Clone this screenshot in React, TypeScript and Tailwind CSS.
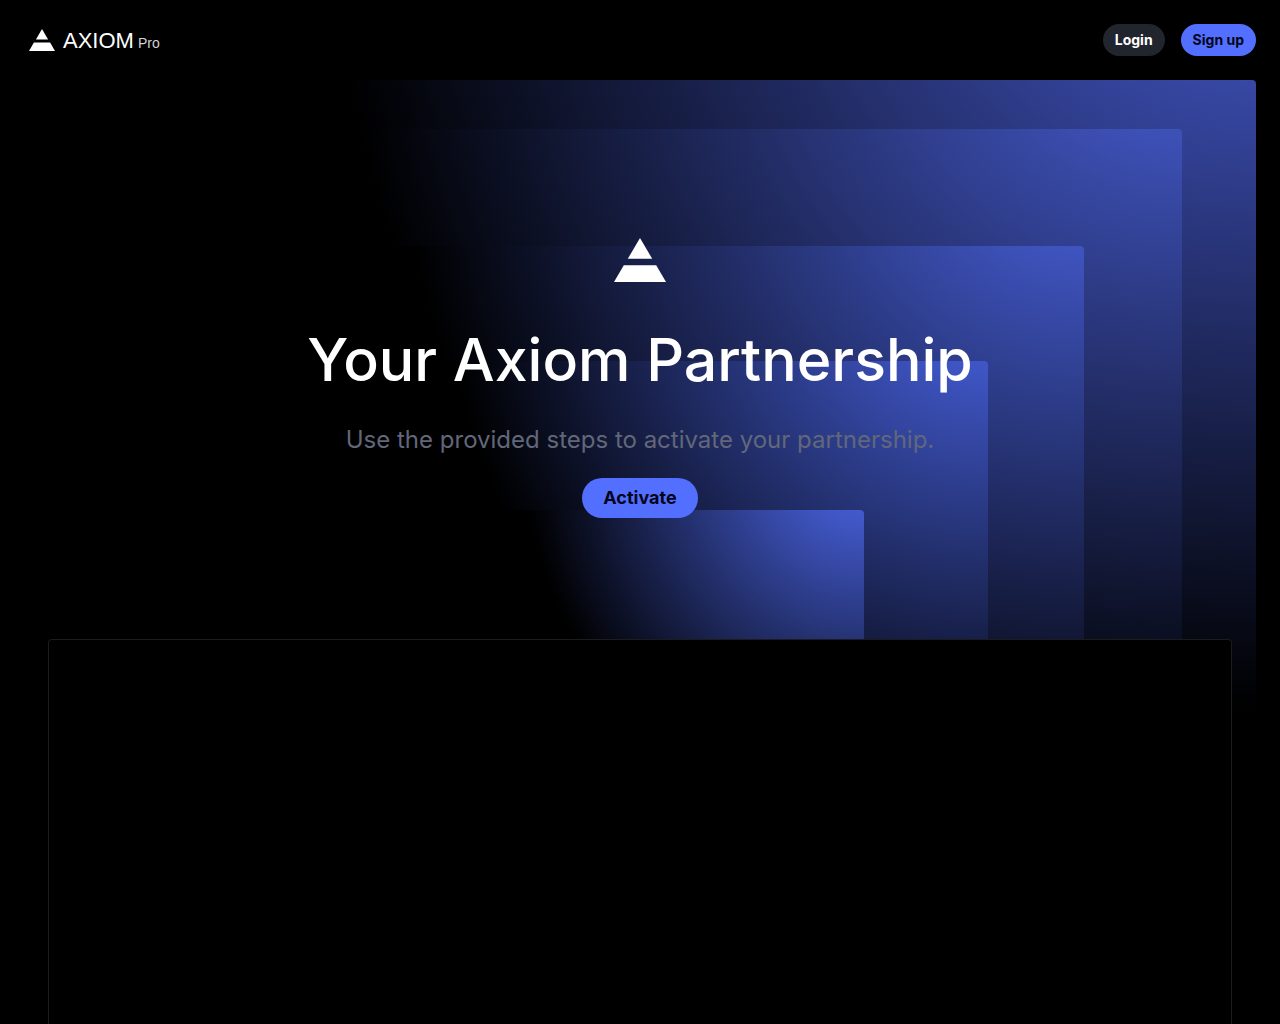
type LogoProps = {
  className?: string
}

function LogoMark({ className }: LogoProps) {
  return (
    <svg viewBox="0 0 52 44" className={className} fill="currentColor" aria-hidden="true">
      <path d="M26 0 38.2 20.8H13.8Z" />
      <path d="M9.8 27.2H42.2L52 44H0Z" />
    </svg>
  )
}

function Header() {
  return (
    <header className="flex h-20 items-center justify-between pl-7 pr-6">
      <a href="/" className="flex items-center gap-[7px]">
        <LogoMark className="h-6 w-7 p-px" />
        <span className="flex items-baseline gap-1 pt-0.5 font-['Liberation_Sans',sans-serif]">
          <span className="text-[22px] leading-8">AXIOM</span>
          <span className="text-sm text-zinc-300">Pro</span>
        </span>
      </a>
      <nav className="flex items-center gap-4 text-sm font-bold">
        <button type="button" className="h-8 rounded-full bg-[#21252d] px-3">
          Login
        </button>
        <button type="button" className="h-8 rounded-full bg-[#526fff] px-3 text-[#030519]">
          Sign up
        </button>
      </nav>
    </header>
  )
}

/** Nested panels, each one lit from just above its top right corner */
function Backdrop() {
  return (
    <div
      className="absolute inset-x-6 top-20 h-[632px] rounded-tr bg-[radial-gradient(930px_790px_at_100%_-160px,#455ace,#000)] pr-[74px] pt-[49px]"
      aria-hidden="true"
    >
      <div className="h-full rounded-tr bg-[radial-gradient(835px_750px_at_100%_-125px,#4a61dc,#000)] pr-[98px] pt-[117px]">
        <div className="h-full rounded-tr bg-[radial-gradient(680px_650px_at_100%_-105px,#4b64e4,#000)] pr-[96px] pt-[115px]">
          <div className="h-full rounded-tr bg-[radial-gradient(540px_520px_at_100%_-80px,#4b66eb,#000)] pr-[124px] pt-[149px]">
            <div className="h-full rounded-tr bg-[radial-gradient(340px_360px_at_100%_-60px,#506cf6,#000)]" />
          </div>
        </div>
      </div>
    </div>
  )
}

function Hero() {
  return (
    <section className="relative flex flex-col items-center px-6 pb-[121px] pt-[158px] text-center">
      <LogoMark className="h-11 w-[52px]" />
      <h1 className="mt-10 text-[59px] font-medium leading-[76px]">Your Axiom Partnership</h1>
      <p className="mt-6 text-2xl leading-9 text-[#62677a]">
        Use the provided steps to activate your partnership.
      </p>
      <button
        type="button"
        className="mt-5 h-10 rounded-full bg-[#526fff] px-[21px] text-lg font-bold text-[#030519]"
      >
        Activate
      </button>
    </section>
  )
}

export default function App() {
  return (
    <div className="relative flex min-h-screen flex-col overflow-hidden bg-black font-['Inter',sans-serif] text-white">
      <Header />
      <Backdrop />
      <Hero />
      <main className="relative mx-12 min-h-[385px] flex-1 rounded-t border border-b-0 border-[#1c1c1f] bg-black" />
    </div>
  )
}
